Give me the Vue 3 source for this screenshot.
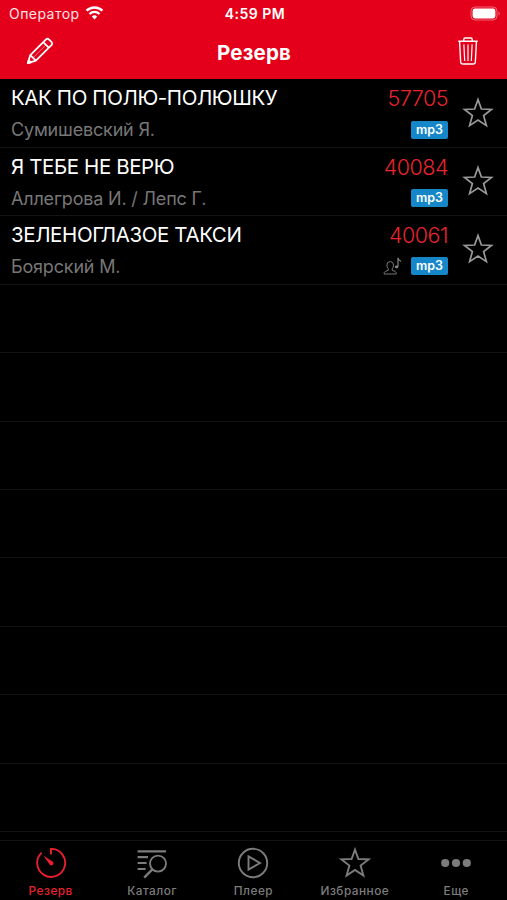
<script setup>
import { ref } from 'vue';

const songs = ref([
  { id: 57705, title: 'КАК ПО ПОЛЮ-ПОЛЮШКУ', artist: 'Сумишевский Я.', backing: false },
  { id: 40084, title: 'Я ТЕБЕ НЕ ВЕРЮ', artist: 'Аллегрова И. / Лепс Г.', backing: false },
  { id: 40061, title: 'ЗЕЛЕНОГЛАЗОЕ ТАКСИ', artist: 'Боярский М.', backing: true },
]);

const tabs = [
  { name: 'reserve', label: 'Резерв' },
  { name: 'catalog', label: 'Каталог' },
  { name: 'player', label: 'Плеер' },
  { name: 'favorites', label: 'Избранное' },
  { name: 'more', label: 'Еще' },
];
const activeTab = ref('reserve');

const starPath = 'M16 2.6 L19.4 12 L29.5 12.4 L21.6 18.6 L24.4 28.6 L16 23 L7.6 28.6 L10.4 18.6 L2.5 12.4 L12.6 12 Z';
</script>

<template>
  <div class="screen">
    <header class="header">
      <div class="status-bar">
        <div class="carrier">
          <span class="carrier-name">Оператор</span>
          <svg class="wifi" width="19" height="14" viewBox="0 0 18 14" fill="none" stroke="#fff">
            <path d="M1.1 4.7 A11.2 11.2 0 0 1 16.9 4.7" stroke-width="2.5" />
            <path d="M4 8 A7.1 7.1 0 0 1 14 8" stroke-width="2.3" />
            <path d="M9 13.4 L6.3 10.6 A3.9 3.9 0 0 1 11.7 10.6 Z" fill="#fff" stroke="none" />
          </svg>
        </div>
        <span class="time">4:59 PM</span>
        <div class="battery-box">
          <svg width="31" height="15" viewBox="0 0 31 15">
            <rect x="1" y="1" width="26" height="13" rx="4" fill="none" stroke="#fff" stroke-opacity="0.4" />
            <rect x="2.6" y="2.6" width="22.8" height="9.8" rx="2.3" fill="#fff" />
            <path d="M28.6 5.2 Q30.6 7.5 28.6 9.8 Z" fill="#fff" fill-opacity="0.5" />
          </svg>
        </div>
      </div>
      <div class="nav-bar">
        <button class="nav-button" aria-label="edit">
          <svg width="28" height="28" viewBox="0 0 30 30" fill="none" stroke="#fff" stroke-width="1.9" stroke-linejoin="round">
            <path d="M2 28 L4.6 19.3 L21.2 2.7 Q23 1 24.8 2.7 L27.2 5.1 Q28.9 6.9 27.2 8.7 L10.6 25.3 Z" />
            <path d="M4.6 19.3 L10.6 25.3 M18.4 5.5 L24.4 11.5" />
            <path d="M7.6 22.3 L21.2 8.7" stroke-width="1" stroke-opacity="0.5" />
            <path d="M2 28 L2.9 24.8 L5.2 27.1 Z" fill="#fff" />
          </svg>
        </button>
        <h1>Резерв</h1>
        <button class="nav-button" aria-label="delete">
          <svg width="22" height="30" viewBox="0 0 24 30" preserveAspectRatio="none" fill="none" stroke="#fff" stroke-width="1.5" stroke-linejoin="round">
            <path d="M1.4 5.2 H22.6 M7.4 5 V3.4 Q7.4 2 8.8 2 H15.2 Q16.6 2 16.6 3.4 V5" />
            <path d="M2.8 5.4 L4 26.3 Q4.1 28 6 28 H18 Q19.9 28 20 26.3 L21.2 5.4" />
            <path d="M7.5 8.4 L8.4 25 M12 8.4 V25 M16.5 8.4 L15.6 25" stroke-width="1.3" />
          </svg>
        </button>
      </div>
    </header>

    <main class="list">
      <div v-for="song in songs" :key="song.id" class="row">
        <div class="song">
          <div class="title">{{ song.title }}</div>
          <div class="artist">{{ song.artist }}</div>
        </div>
        <div class="info">
          <div class="number">{{ song.id }}</div>
          <div class="marks">
            <svg v-if="song.backing" width="20" height="20" viewBox="0 0 20 20" fill="none" stroke="#858585">
              <path d="M1.2 18 V16.6 Q1.4 15.3 5.2 14.3 V12.8 Q3.9 11.4 3.9 9 Q3.9 5.6 7.2 5.6 Q10.5 5.6 10.5 9 Q10.5 11.4 9.2 12.8 V14.3 Q13 15.3 13.2 16.6 V18 Z" stroke-width="0.9" />
              <path d="M15 10.6 V1.8 Q15.5 4.4 18 5.4" stroke-width="1.2" />
              <ellipse cx="13.6" cy="10.9" rx="1.8" ry="1.4" fill="#858585" stroke="none" />
            </svg>
            <span class="badge">mp3</span>
          </div>
        </div>
        <svg class="star" width="32" height="32" viewBox="0 0 32 32" fill="none" stroke="#999" stroke-width="1.7">
          <path :d="starPath" />
        </svg>
      </div>
      <div v-for="n in 8" :key="'empty' + n" class="row"></div>
    </main>

    <nav class="tab-bar">
      <button
        v-for="tab in tabs"
        :key="tab.name"
        class="tab"
        :class="{ active: tab.name === activeTab }"
        @click="activeTab = tab.name"
      >
        <svg width="32" height="32" viewBox="0 0 32 32" fill="none" stroke="currentColor" stroke-width="1.9">
          <g v-if="tab.name === 'reserve'">
            <path d="M16 7.4 V1.9 A14 14 0 1 1 6.7 5.6" />
            <path d="M8.3 8.6 L17.9 14.8 A2.1 2.1 0 0 1 14.8 17.8 Z" fill="currentColor" stroke="none" />
          </g>
          <g v-else-if="tab.name === 'catalog'">
            <path d="M1.6 4.3 H30 M1.6 10.2 H12 M1.6 16 H10.6 M1.6 22 H9.6" stroke-width="2.2" />
            <circle cx="22" cy="16.6" r="8" />
            <path d="M16.4 22.4 L8.2 30.6" stroke-width="2.4" />
          </g>
          <g v-else-if="tab.name === 'player'">
            <circle cx="16" cy="16" r="14.2" />
            <path d="M11.5 9.4 L23 16 L11.5 22.6 Z" />
          </g>
          <path v-else-if="tab.name === 'favorites'" :d="starPath" />
          <g v-else fill="currentColor" stroke="none">
            <circle cx="5.2" cy="16" r="4.1" />
            <circle cx="16" cy="16" r="4.1" />
            <circle cx="26.8" cy="16" r="4.1" />
          </g>
        </svg>
        <span>{{ tab.label }}</span>
      </button>
    </nav>
  </div>
</template>

<style>
body {
  margin: 0;
  background: #000;
}
</style>

<style scoped>
.screen {
  display: flex;
  flex-direction: column;
  height: 900px;
  overflow: hidden;
  background: #000;
  color: #fff;
  font-family: Inter, 'Liberation Sans', sans-serif;
}
button {
  padding: 0;
  border: 0;
  background: none;
  color: inherit;
  font-family: inherit;
}
svg {
  display: block;
  flex: none;
}
.header {
  height: 79px;
  flex: none;
  background: #e4001b;
}
.status-bar {
  display: grid;
  grid-template-columns: 1fr auto 1fr;
  align-items: center;
  height: 27px;
  padding: 0 6px 0 9px;
}
.carrier {
  display: flex;
  align-items: center;
  gap: 5px;
}
.carrier-name {
  color: #ffe3e5;
  font-size: 14px;
  letter-spacing: 0.45px;
}
.wifi {
  margin-top: -2px;
}
.time {
  font-size: 14px;
  font-weight: 600;
  letter-spacing: 0.5px;
}
.battery-box {
  display: flex;
  justify-content: flex-end;
  margin-top: -1px;
}
.nav-bar {
  display: flex;
  align-items: center;
  justify-content: space-between;
  height: 48px;
  padding: 0 28px 0 26px;
}
h1 {
  margin: 3px 3px 0 0;
  font-size: 20.5px;
  font-weight: 700;
  letter-spacing: 0.2px;
}
.list {
  flex: none;
  box-sizing: border-box;
  height: 761px;
  padding-top: 0.7px;
  overflow: hidden;
}
.row {
  display: flex;
  align-items: center;
  box-sizing: border-box;
  height: 68.4px;
  padding: 0 13px 1.4px 11px;
  border-bottom: 1px solid #131313;
}
.song {
  flex: 1;
}
.title,
.number {
  height: 34px;
  font-size: 20.5px;
  line-height: 34px;
  letter-spacing: -0.4px;
}
.artist {
  height: 29px;
  color: #777;
  font-size: 18px;
  line-height: 29px;
  letter-spacing: -0.18px;
}
.info {
  margin-right: 14px;
}
.number {
  color: #e8242e;
  font-size: 21.5px;
  font-weight: 300;
  letter-spacing: -0.5px;
  text-align: right;
}
.marks {
  display: flex;
  align-items: center;
  justify-content: flex-end;
  gap: 8px;
  height: 29px;
}
.badge {
  width: 37px;
  height: 18px;
  border-radius: 2px;
  background: #1587c9;
  font-size: 12.5px;
  font-weight: 600;
  line-height: 17px;
  text-align: center;
}
.tab-bar {
  display: grid;
  grid-template-columns: repeat(5, 1fr);
  box-sizing: border-box;
  height: 60px;
  border-top: 1px solid #131313;
}
.tab {
  display: flex;
  flex-direction: column;
  align-items: center;
  padding-top: 6.4px;
  color: #7c7c7c;
}
.tab span {
  margin-top: 4.6px;
  font-size: 11.8px;
  font-weight: 500;
  line-height: 15px;
  letter-spacing: 0.5px;
}
.tab.active {
  color: #e8202c;
}
</style>
